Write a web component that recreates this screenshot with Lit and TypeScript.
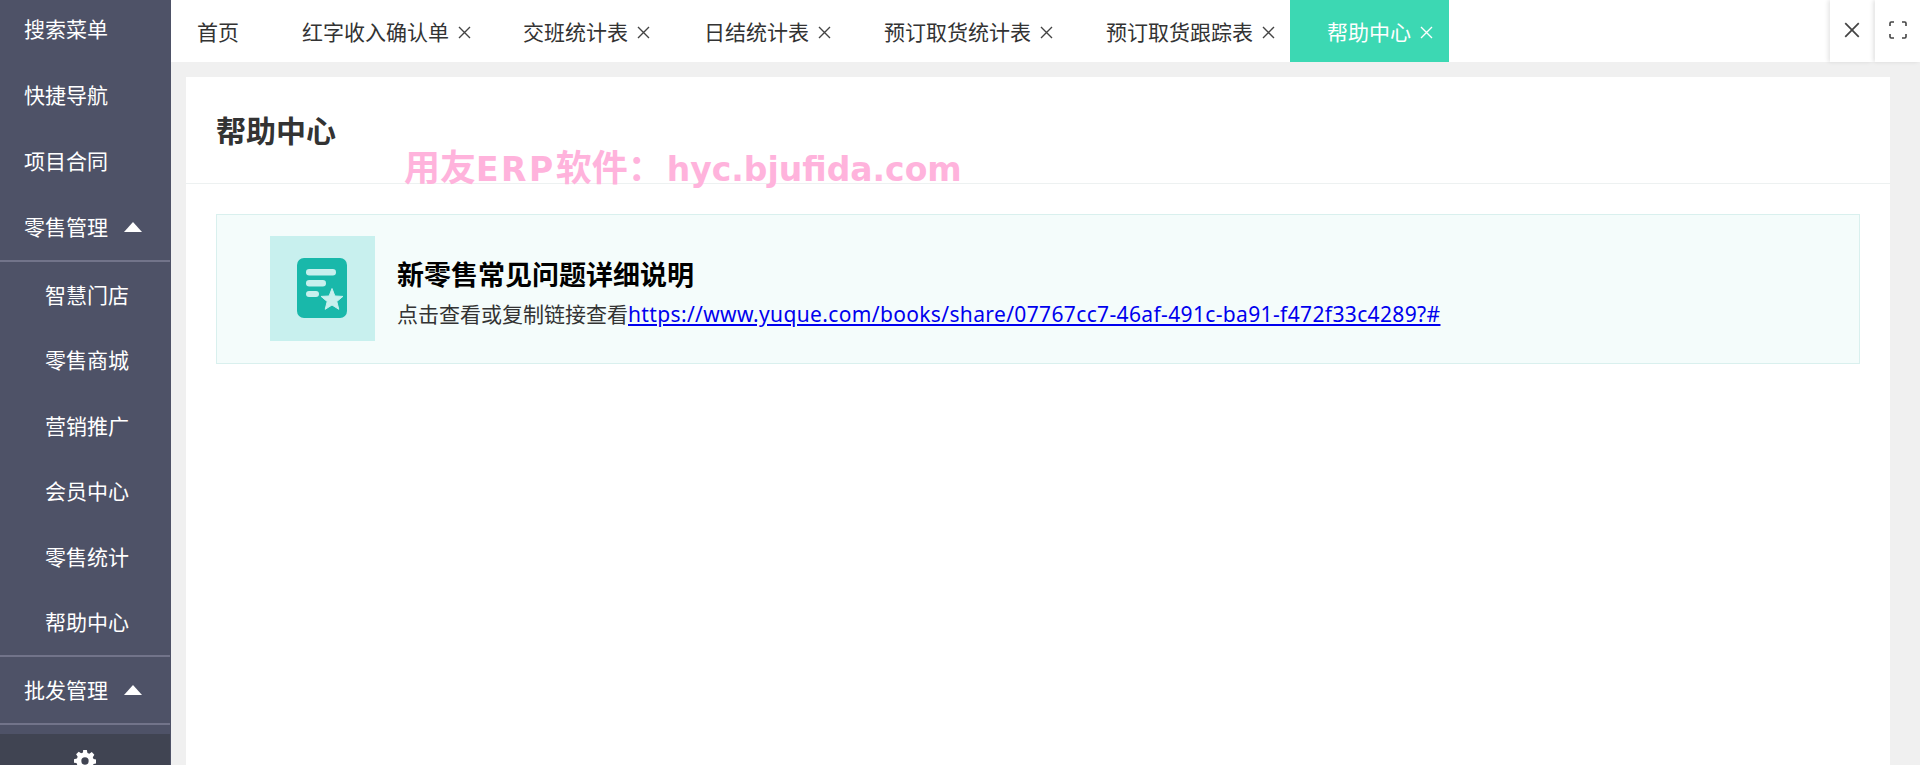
import { LitElement, html, css, svg } from "lit";
import { customElement } from "lit/decorators.js";

const close = (size: number) => html`<svg class="x" width=${size} height=${size} viewBox="0 0 13 13" fill="none" stroke="currentColor" stroke-width="1.4"><path d="M1 1L12 12M12 1L1 12"/></svg>`;

@customElement("app-root")
export class AppRoot extends LitElement {
  static styles = css`
    :host { display: block; width: 1920px; height: 765px; overflow: hidden; position: relative; background: #f0f0f0;
      font-family: "Noto Sans", "Noto Sans CJK SC", sans-serif; }
    .app { display: flex; height: 765px; }
    .side { width: 171px; flex: none; height: 765px; background: #4e5267; color: #fff; display: flex; flex-direction: column; overflow: hidden; font-size: 21px; }
    .list { margin-top: -4px; flex: none; }
    .item { height: 66px; display: flex; align-items: center; padding-left: 24px; gap: 16px; box-sizing: border-box; width: 170px; }
    .lbl { margin-top: -2px; }
    .sub { height: 65.5px; padding-left: 45px; }
    .tri { width: 0; height: 0; border-left: 9px solid transparent; border-right: 9px solid transparent; border-bottom: 10px solid #fff; }
    .sep { height: 2px; width: 170px; background: #72748a; }
    .foot { margin-top: 9px; width: 170px; height: 40px; background: #404452; display: flex; justify-content: center; padding-top: 16px; box-sizing: border-box; flex: none; }
    .main { flex: 1; display: flex; flex-direction: column; min-width: 0; }
    .bar { height: 62px; flex: none; background: #fff; display: flex; }
    .tabs { flex: 1; display: flex; }
    .tab { display: flex; align-items: center; padding-left: 37px; font-size: 21px; color: #333; box-sizing: border-box; white-space: nowrap; }
    .tab.home { padding-left: 26px; width: 94px; }
    .tab .x { margin-left: 9px; margin-top: 3px; color: #444; flex: none; }
    .tab.long { width: 221px; }
    .tab.long.w { width: 222px; }
    .tab.mid { width: 180px; }
    .tab.mid.w { width: 181px; }
    .tab.on { width: 159px; background: #3cd8b3; color: #fff; }
    .tab.on .x { color: #fff; }
    .btn { flex: none; height: 62px; background: #fff; display: flex; align-items: center; justify-content: center; color: #444; box-shadow: -2px 0 4px rgba(0,0,0,.1); }
    .btn svg { margin-bottom: 3px; }
    .btn.c { width: 43px; margin-right: 2px; }
    .btn.c svg { margin-bottom: 2px; }
    .btn.f { width: 45px; }
    .content { flex: 1; padding: 15px 30px 0 15px; min-height: 0; }
    .panel { background: #fff; height: 100%; }
    .head { height: 106px; border-bottom: 1px solid #edf1f1; padding-left: 30px; display: flex; align-items: center; font-size: 30px; font-weight: 700; color: #333; }
    .head span { margin-top: -2px; }
    .body { padding: 30px 30px 0 30px; }
    .card { height: 150px; box-sizing: border-box; border: 1px solid #d9f0ee; background: #f4fcfb; display: flex; align-items: flex-start; padding: 21px 0 0 53px; gap: 22px; }
    .ico { width: 105px; height: 105px; flex: none; display: block; }
    .txt { padding-top: 21px; }
    .t { font-size: 27px; font-weight: 700; color: #000; line-height: 36px; }
    .d { font-size: 21px; color: #333; line-height: 30px; margin-top: 6px; white-space: nowrap; }
    .d a { color: #00e; text-decoration: underline; letter-spacing: .36px; }
    .mark { position: absolute; left: 404px; top: 145px; font-size: 36px; font-weight: 700; color: #ffb3dc; line-height: 48px; white-space: nowrap; font-family: "DejaVu Sans", "Noto Sans CJK SC", sans-serif; }
    .mark .lat { font-size: 33px; }
    .mark .erp { letter-spacing: 2.5px; }
    .mark .url { margin-left: 3px; }
  `;

  render() {
    const star = "62,52.5 64.9,60 72.9,60.4 66.8,65.5 68.8,73.3 62,69 55.2,73.3 57.2,65.5 51.1,60.4 59.1,60";
    return html`
      <div class="app">
        <aside class="side">
          <div class="list">
            <div class="item"><span class="lbl">搜索菜单</span></div>
            <div class="item"><span class="lbl">快捷导航</span></div>
            <div class="item"><span class="lbl">项目合同</span></div>
            <div class="item"><span class="lbl">零售管理</span><span class="tri"></span></div>
            <div class="sep"></div>
            ${["智慧门店", "零售商城", "营销推广", "会员中心", "零售统计", "帮助中心"].map((s) => html`<div class="item sub"><span class="lbl">${s}</span></div>`)}
            <div class="sep"></div>
            <div class="item"><span class="lbl">批发管理</span><span class="tri"></span></div>
            <div class="sep"></div>
          </div>
          <div class="foot">
            <svg width="22" height="22" viewBox="0 0 24 24" fill="#fff"><path fill-rule="evenodd" d="M10 0h4l.7 3.200 2 .8L19.400 2.300l2.800 2.800-1.700 2.700.8 2 3.200.7v4l-3.200.7-.8 2 1.700 2.700-2.800 2.800-2.700-1.700-2 .8L14 24h-4l-.7-3.200-2-.8-2.700 1.700-2.800-2.800 1.700-2.700-.8-2L0 14v-4l3.200-.7.8-2L2.300 4.600l2.800-2.800L7.800 3.500l2-.8zM12 8a4 4 0 1 0 0 8 4 4 0 0 0 0-8z"/></svg>
          </div>
        </aside>
        <div class="main">
          <div class="bar">
            <div class="tabs">
              <div class="tab home">首页</div>
              <div class="tab long">红字收入确认单${close(13)}</div>
              <div class="tab mid w">交班统计表${close(13)}</div>
              <div class="tab mid">日结统计表${close(13)}</div>
              <div class="tab long w">预订取货统计表${close(13)}</div>
              <div class="tab long">预订取货跟踪表${close(13)}</div>
              <div class="tab on">帮助中心${close(13)}</div>
            </div>
            <div class="btn c">${close(16)}</div>
            <div class="btn f">
              <svg width="18" height="18" viewBox="0 0 18 18" fill="none" stroke="#444" stroke-width="1.6"><path d="M1 5V2.200C1 1.500 1.500 1 2.200 1H5M13 1h2.800c.7 0 1.200.5 1.200 1.200V5M17 13v2.800c0 .7-.5 1.200-1.200 1.200H13M5 17H2.200C1.500 17 1 16.500 1 15.800V13"/></svg>
            </div>
          </div>
          <div class="content">
            <div class="panel">
              <div class="head"><span>帮助中心</span></div>
              <div class="body">
                <div class="card">
                  <svg class="ico" viewBox="0 0 105 105">
                    ${svg`<rect width="105" height="105" fill="#c8f0ee"/>
                    <rect x="27" y="22" width="50" height="60" rx="7" fill="#19b8aa"/>
                    <rect x="36" y="33" width="30" height="6.5" rx="3.2" fill="#c8f0ee"/>
                    <rect x="36" y="44" width="20" height="6.5" rx="3.2" fill="#c8f0ee"/>
                    <rect x="36" y="55" width="13" height="6" rx="3" fill="#c8f0ee"/>
                    <polygon points=${star} fill="#c8f0ee" stroke="#c8f0ee" stroke-width="1" stroke-linejoin="round"/>`}
                  </svg>
                  <div class="txt">
                    <div class="t">新零售常见问题详细说明</div>
                    <div class="d">点击查看或复制链接查看<a href="#">https://www.yuque.com/books/share/07767cc7-46af-491c-ba91-f472f33c4289?#</a></div>
                  </div>
                </div>
              </div>
            </div>
          </div>
        </div>
      </div>
      <div class="mark">用友<span class="lat erp">ERP</span>软件：<span class="lat url">hyc.bjufida.com</span></div>
    `;
  }
}
